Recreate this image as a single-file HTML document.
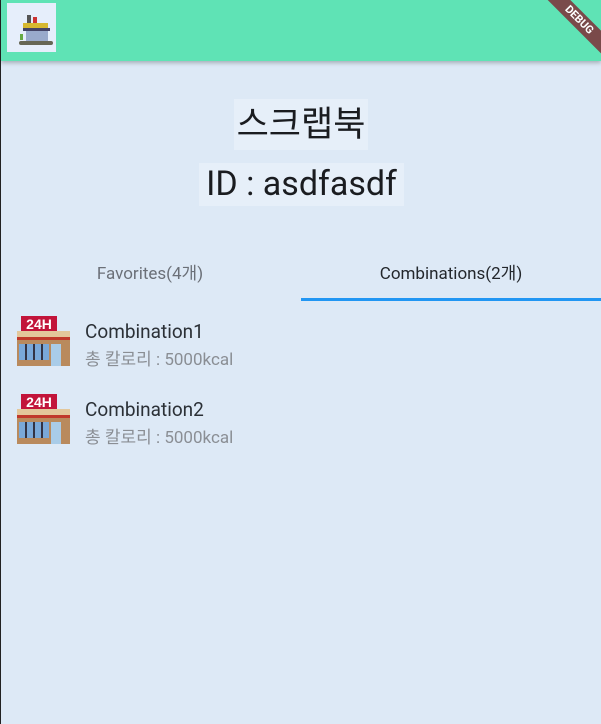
<!DOCTYPE html>
<html><head><meta charset="utf-8"><style>
*{margin:0;padding:0;box-sizing:border-box}
body{width:601px;height:724px;overflow:hidden;background:#dde9f6;font-family:"Roboto","Liberation Sans","Noto Sans CJK KR",sans-serif;position:relative}
.lb{position:absolute;left:0;top:0;width:1px;height:724px;background:#222}
.bar{position:absolute;left:1px;top:0;width:600px;height:61px;background:#5fe3b5;box-shadow:0 2px 4px rgba(0,0,0,.25);overflow:hidden}
.logo{position:absolute;left:6px;top:3px;width:49px;height:49px;background:#e6eefb}
.debug{position:absolute;right:-28px;top:12px;width:100px;height:16px;background:#7a4a4a;color:#fff;font-size:11px;font-weight:bold;text-align:center;line-height:16px;transform:rotate(45deg)}
.t{position:absolute;background:#e6eff9;color:#1a1c20;text-align:center;white-space:nowrap}
.tab{position:absolute;top:259px;font-size:17px;width:300px;text-align:center}
.ind{position:absolute;left:301px;top:298px;width:300px;height:3px;background:#2196f3}
.item{position:absolute;left:17px}
.item .n{position:absolute;left:68px;top:6px;font-size:19px;color:#2b3036;white-space:nowrap}
.item .s{position:absolute;left:68px;top:31px;font-size:17px;color:#8a8e94;white-space:nowrap}
</style></head><body>
<div class="lb"></div>
<div class="bar"><div class="logo">
<svg width="49" height="49" viewBox="0 0 49 49"><rect x="16" y="20" width="25" height="5" fill="#d6b830"/><rect x="20" y="12" width="4" height="8" fill="#555"/><rect x="26" y="14" width="4" height="6" fill="#c33"/><rect x="16" y="25" width="27" height="3" fill="#446"/><rect x="19" y="28" width="22" height="11" fill="#9ac"/><rect x="12" y="38" width="34" height="4" rx="2" fill="#665"/><rect x="13" y="31" width="3" height="6" fill="#6a4"/></svg>
</div><div class="debug">DEBUG</div></div>
<div class="t" style="left:234px;top:99px;width:134px;height:51px;font-size:35px;line-height:51px">스크랩북</div>
<div class="t" style="left:199px;top:163px;width:205px;height:43px;font-size:34px;line-height:43px">ID : asdfasdf</div>
<div class="tab" style="left:0;color:#6b7078">Favorites(4개)</div>
<div class="tab" style="left:301px;color:#23272c">Combinations(2개)</div>
<div class="ind"></div>
<div class="item" style="top:314px">
<svg width="53" height="53" viewBox="0 0 53 53"><rect x="4" y="2" width="36" height="15" fill="#c2143a"/><text x="22" y="15" font-size="14" font-weight="bold" fill="#fff" text-anchor="middle" font-family="Liberation Sans">24H</text><rect x="0" y="17" width="53" height="6" fill="#e3c79b"/><rect x="0" y="23" width="53" height="3" fill="#c0392b"/><rect x="0" y="26" width="53" height="26" fill="#b98a5d"/><rect x="2" y="30" width="30" height="16" fill="#7aa8d8"/><rect x="34" y="30" width="10" height="22" fill="#a9cce8"/><rect x="8" y="30" width="2" height="16" fill="#334"/><rect x="16" y="30" width="2" height="16" fill="#334"/><rect x="24" y="30" width="2" height="16" fill="#334"/></svg>
<div class="n">Combination1</div><div class="s">총 칼로리 : 5000kcal</div></div>
<div class="item" style="top:392px">
<svg width="53" height="53" viewBox="0 0 53 53"><rect x="4" y="2" width="36" height="15" fill="#c2143a"/><text x="22" y="15" font-size="14" font-weight="bold" fill="#fff" text-anchor="middle" font-family="Liberation Sans">24H</text><rect x="0" y="17" width="53" height="6" fill="#e3c79b"/><rect x="0" y="23" width="53" height="3" fill="#c0392b"/><rect x="0" y="26" width="53" height="26" fill="#b98a5d"/><rect x="2" y="30" width="30" height="16" fill="#7aa8d8"/><rect x="34" y="30" width="10" height="22" fill="#a9cce8"/><rect x="8" y="30" width="2" height="16" fill="#334"/><rect x="16" y="30" width="2" height="16" fill="#334"/><rect x="24" y="30" width="2" height="16" fill="#334"/></svg>
<div class="n">Combination2</div><div class="s">총 칼로리 : 5000kcal</div></div>
</body></html>
